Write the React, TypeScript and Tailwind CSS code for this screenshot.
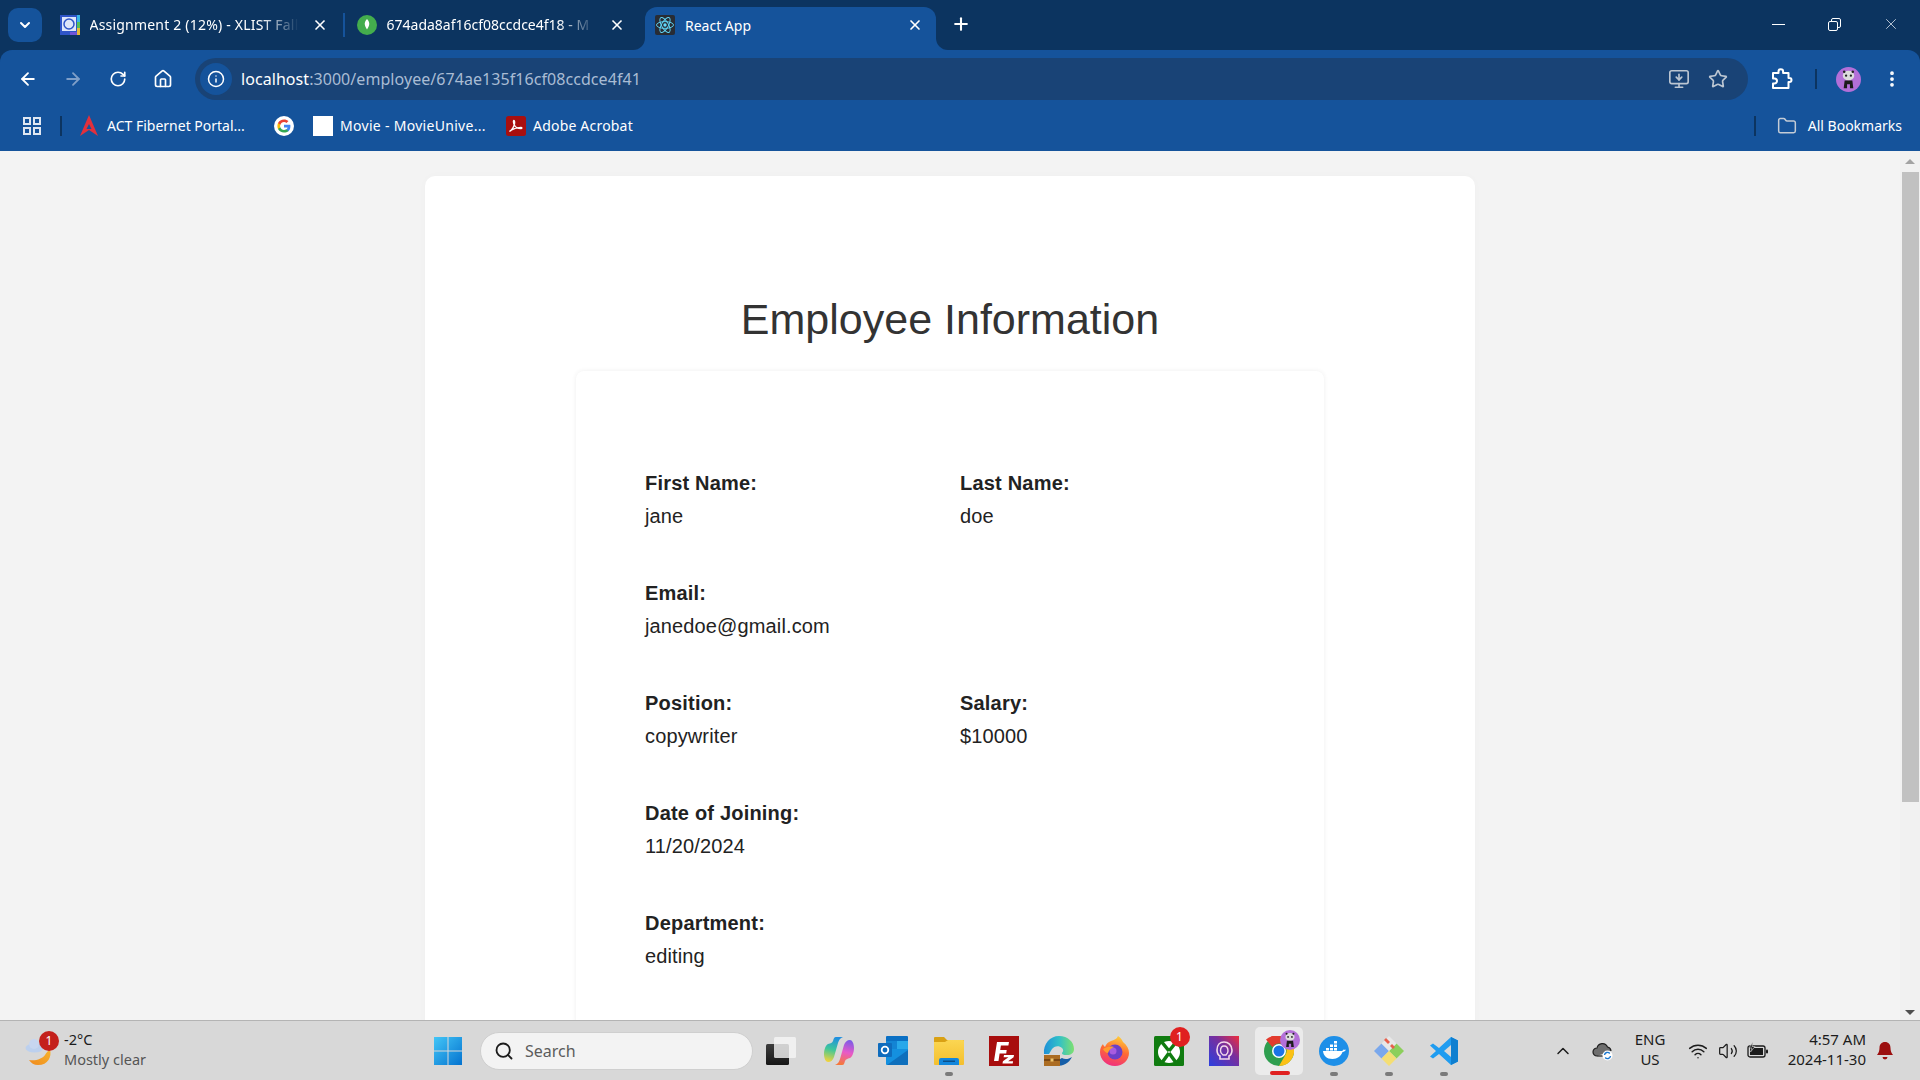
import React from 'react';
import {
  ArrowLeft,
  ArrowRight,
  ChevronDown,
  ChevronUp,
  EllipsisVertical,
  Folder,
  House,
  Info,
  MonitorDown,
  Plus,
  RotateCw,
  Search,
  Star,
  Volume2,
  Wifi,
  X,
} from 'lucide-react';

type FieldProps = {
  label: string;
  value: string;
  wide?: boolean;
};

const fields: FieldProps[] = [
  { label: 'First Name:', value: 'jane' },
  { label: 'Last Name:', value: 'doe' },
  { label: 'Email:', value: 'janedoe@gmail.com', wide: true },
  { label: 'Position:', value: 'copywriter' },
  { label: 'Salary:', value: '$10000' },
  { label: 'Date of Joining:', value: '11/20/2024', wide: true },
  { label: 'Department:', value: 'editing', wide: true },
];

function Field({ label, value, wide }: FieldProps) {
  return (
    <div className={wide ? 'col-span-2' : ''}>
      <div className="text-[20px] leading-[24px] font-bold tracking-[0.2px] text-[#222222]">{label}</div>
      <div className="mb-[1px] mt-[9px] text-[20px] leading-[24px] tracking-[0.13px] text-[#222222]">{value}</div>
    </div>
  );
}

function SchoolIcon() {
  return (
    <svg width="20" height="20" viewBox="0 0 20 20">
      <rect width="20" height="20" fill="#2f55c8" />
      <rect x="2" y="2" width="14" height="14" fill="#dfe6fa" />
      <circle cx="9" cy="9" r="5" fill="none" stroke="#2f55c8" strokeWidth="1.5" />
      <rect x="17" y="0" width="3" height="7" fill="#38b6e8" />
      <rect x="17" y="7" width="3" height="6" fill="#55c05a" />
      <rect x="17" y="13" width="3" height="7" fill="#e7b93a" />
      <rect x="10" y="17" width="7" height="3" fill="#6f55d8" />
    </svg>
  );
}

function MongoIcon() {
  return (
    <svg width="20" height="20" viewBox="0 0 20 20">
      <circle cx="10" cy="10" r="10" fill="#44ad4d" />
      <path d="M10 4c2 2 2.500 4 2.200 5.600C12 11.500 11 13 10 14.500 9 13 8 11.500 7.800 9.600 7.500 8 8 6 10 4z" fill="#ffffff" />
    </svg>
  );
}

function ReactIcon() {
  return (
    <svg width="20" height="20" viewBox="0 0 20 20">
      <rect width="20" height="20" rx="2" fill="#282c34" />
      <g fill="none" stroke="#61dafb" strokeWidth="0.9">
        <ellipse cx="10" cy="10" rx="8.500" ry="3.400" />
        <ellipse cx="10" cy="10" rx="8.500" ry="3.400" transform="rotate(60 10 10)" />
        <ellipse cx="10" cy="10" rx="8.500" ry="3.400" transform="rotate(120 10 10)" />
      </g>
      <circle cx="10" cy="10" r="1.700" fill="#61dafb" />
    </svg>
  );
}

function GoogleIcon() {
  return (
    <svg width="20" height="20" viewBox="0 0 20 20">
      <circle cx="10" cy="10" r="10" fill="#ffffff" />
      <path d="M16.400 10.200c0-.5 0-1-.1-1.400H10v2.700h3.600c-.2.900-.7 1.600-1.400 2.100v1.700h2.300c1.200-1.200 1.900-2.900 1.900-5.100z" fill="#4285f4" />
      <path d="M10 16.600c1.800 0 3.300-.6 4.500-1.600l-2.300-1.800c-.6.400-1.300.7-2.200.7-1.700 0-3.200-1.200-3.700-2.700H4v1.800c1.100 2.200 3.400 3.600 6 3.600z" fill="#34a853" />
      <path d="M6.300 11.200c-.3-.8-.3-1.600 0-2.400V7H4c-.8 1.600-.8 4.400 0 6l2.300-1.800z" fill="#fbbc05" />
      <path d="M10 6.100c1 0 1.800.3 2.500 1l2-2C13.300 4 11.800 3.400 10 3.400 7.400 3.400 5.100 4.800 4 7l2.300 1.800c.5-1.500 2-2.700 3.700-2.700z" fill="#ea4335" />
    </svg>
  );
}

function ActIcon() {
  return (
    <svg width="20" height="22" viewBox="0 0 20 22">
      <path d="M10 0l9 21-9-6-9 6z" fill="#e2303c" />
      <path d="M10 9l2.500 5h-5z" fill="#15539b" />
    </svg>
  );
}

function AcrobatIcon() {
  return (
    <svg width="20" height="20" viewBox="0 0 20 20">
      <rect width="20" height="20" rx="2.500" fill="#a80f0f" />
      <path d="M3.500 15.500c2-1 4-4 5-7.500.3-1.500.2-3.500-.6-3.500s-.6 2.500.4 4.500c1.300 2.500 3.500 3.700 6.500 3.700 1.500 0 1.500-1.300 0-1.300-3 0-7 1.200-10.300 3.100z" fill="none" stroke="#ffffff" strokeWidth="1.300" />
    </svg>
  );
}

function PuzzleIcon() {
  return (
    <svg width="22" height="22" viewBox="0 0 22 22" fill="none" stroke="#ffffff" strokeWidth="2" strokeLinejoin="round">
      <path d="M2 5h5.500V3.500a2.300 2.300 0 0 1 4.600 0V5H17.500v5h1a2 2 0 0 1 0 4h-1v6H2v-4.500h1.500a2.500 2.500 0 0 0 0-5H2z" />
    </svg>
  );
}

function PandaAvatar({ size }: { size: number }) {
  return (
    <svg width={size} height={size} viewBox="0 0 26 26">
      <circle cx="13" cy="13" r="13" fill="#b36fd8" />
      <ellipse cx="13" cy="9" rx="6" ry="5" fill="#dcdcdc" />
      <circle cx="8.500" cy="5" r="1.300" fill="#222222" />
      <circle cx="17.500" cy="5" r="1.300" fill="#222222" />
      <circle cx="10.500" cy="9" r="1.200" fill="#222222" />
      <circle cx="15.500" cy="9" r="1.200" fill="#222222" />
      <path d="M9 14h8l1 8h-3.500v-4h-3v4H8z" fill="#1c1c1c" />
    </svg>
  );
}

function WeatherIcon() {
  return (
    <svg width="30" height="34" viewBox="0 0 30 34">
      <defs>
        <linearGradient id="moon" x1="0" y1="1" x2="1" y2="0">
          <stop offset="0" stopColor="#f08a1e" />
          <stop offset="1" stopColor="#f6b52c" />
        </linearGradient>
      </defs>
      <path d="M26 15c2 8-2 16-12 16-4 0-7-2-9-5 7 1 13-1 16-5 1-2 3-4 5-6z" fill="url(#moon)" />
      <ellipse cx="10.500" cy="14" rx="9" ry="4.500" fill="#bcd0ee" />
      <circle cx="10" cy="10" r="5" fill="#c7d6f0" />
    </svg>
  );
}

function WindowsIcon() {
  return (
    <svg width="30" height="30" viewBox="0 0 30 30">
      <defs>
        <linearGradient id="win" x1="0" y1="0" x2="1" y2="1">
          <stop offset="0" stopColor="#43c6f7" />
          <stop offset="1" stopColor="#0472cf" />
        </linearGradient>
      </defs>
      <path d="M1 1h13.500v13.500H1zM15.500 1H29v13.500H15.500zM1 15.500h13.500V29H1zM15.500 15.500H29V29H15.500z" fill="url(#win)" />
    </svg>
  );
}

function TaskViewIcon() {
  return (
    <svg width="30" height="30" viewBox="0 0 30 30">
      <defs>
        <linearGradient id="taskDark" x1="0" y1="0" x2="0" y2="1">
          <stop offset="0" stopColor="#3c3c3c" />
          <stop offset="1" stopColor="#161616" />
        </linearGradient>
      </defs>
      <rect x="0" y="8" width="23" height="21" rx="1.500" fill="url(#taskDark)" />
      <rect x="8" y="1" width="22" height="21" rx="1.500" fill="#f6f6f6" fillOpacity="0.8" />
    </svg>
  );
}

function CopilotIcon() {
  return (
    <svg width="32" height="30" viewBox="0 0 32 30">
      <defs>
        <linearGradient id="copL" x1="0.500" y1="0" x2="0.300" y2="1">
          <stop offset="0" stopColor="#1f8fe0" />
          <stop offset="0.500" stopColor="#3fc79a" />
          <stop offset="1" stopColor="#f2d33c" />
        </linearGradient>
        <linearGradient id="copR" x1="0.700" y1="0" x2="0.500" y2="1">
          <stop offset="0" stopColor="#7a5ce8" />
          <stop offset="0.500" stopColor="#e85ac8" />
          <stop offset="1" stopColor="#f5783c" />
        </linearGradient>
      </defs>
      <path d="M13 1h7c-3 1-4 3-5 6l-4 14c-1 3-3 5-6 5-2 0-4-3-4-8 0-5 2-9 4-10 3-1 4-1 5-3 1-3 1-4 3-4z" fill="url(#copL)" />
      <path d="M19 29h-7c3-1 4-3 5-6l4-14c1-3 3-5 6-5 2 0 4 3 4 8 0 5-2 9-4 10-3 1-4 1-5 3-1 3-1 4-3 4z" fill="url(#copR)" />
    </svg>
  );
}

function OutlookIcon() {
  return (
    <svg width="32" height="30" viewBox="0 0 32 30">
      <rect x="8" y="0" width="22" height="14" rx="1" fill="#0a70c4" />
      <rect x="19" y="5" width="11" height="9" fill="#28a8ea" />
      <rect x="8" y="5" width="11" height="9" fill="#1384d4" />
      <path d="M8 13h22v15a1 1 0 0 1-1 1H9a1 1 0 0 1-1-1z" fill="#1490df" />
      <path d="M9 29l21-15v14a1 1 0 0 1-1 1z" fill="#0e6fbc" />
      <rect x="0" y="7" width="14" height="14" rx="1" fill="#0f6cbd" />
      <circle cx="7" cy="14" r="3.300" fill="none" stroke="#ffffff" strokeWidth="1.800" />
    </svg>
  );
}

function ExplorerIcon() {
  return (
    <svg width="32" height="28" viewBox="0 0 32 28">
      <path d="M1 1a1 1 0 0 1 1-1h9l3 3h17v6H1z" fill="#d9a114" />
      <defs>
        <linearGradient id="folder" x1="0" y1="0" x2="0" y2="1">
          <stop offset="0" stopColor="#fbd652" />
          <stop offset="1" stopColor="#f4bf2e" />
        </linearGradient>
      </defs>
      <path d="M1 5h11l3-2h15a1 1 0 0 1 1 1v23a1 1 0 0 1-1 1H2a1 1 0 0 1-1-1z" fill="url(#folder)" />
      <path d="M6 28v-5a2 2 0 0 1 2-2h16a2 2 0 0 1 2 2v5z" fill="#1286dc" />
      <rect x="10" y="23.500" width="12" height="1.500" fill="#0a4f8a" />
    </svg>
  );
}

function FileZillaIcon() {
  return (
    <svg width="30" height="30" viewBox="0 0 30 30">
      <rect width="30" height="30" fill="#a80d0d" />
      <path d="M5 25l3-19h12l-.6 3.500h-7.500l-.7 4.500h6.500l-.5 3.500h-6.600L9.500 25z" fill="#ffffff" />
      <path d="M15 19h10l-.4 2.200-5.500 4h5l-.4 2.300H13.500l.4-2.200 5.500-4h-4.800z" fill="#ffffff" />
    </svg>
  );
}

function EdgeIcon() {
  return (
    <svg width="32" height="32" viewBox="0 0 32 32">
      <defs>
        <linearGradient id="edge" x1="0" y1="0.500" x2="1" y2="0.500">
          <stop offset="0" stopColor="#1e90d8" />
          <stop offset="0.500" stopColor="#30c0c8" />
          <stop offset="1" stopColor="#7ee070" />
        </linearGradient>
      </defs>
      <path d="M1 19C0 9 7 1 16 1c9 0 15 6 15 13 0 4-3 6-7 6-2 0-5 0-5-2 1-1 2-3 0-5-3-3-8-2-10 1-1 2-2 3-3 5z" fill="url(#edge)" />
      <path d="M13 31c8 0 13-3 16-9-3 2-7 3-10 1-3 1-5 5-6 8z" fill="#155ea8" />
      <rect x="1" y="20" width="16" height="11" fill="#ab6c22" />
      <rect x="1" y="24" width="16" height="2" fill="#7b4813" />
      <rect x="7.500" y="23.500" width="3" height="3" fill="#eec46a" />
    </svg>
  );
}

function FirefoxIcon() {
  return (
    <svg width="32" height="32" viewBox="0 0 32 32">
      <defs>
        <linearGradient id="fox" x1="0.700" y1="0" x2="0.400" y2="1">
          <stop offset="0" stopColor="#ffd23a" />
          <stop offset="0.500" stopColor="#ff6a33" />
          <stop offset="1" stopColor="#f0307e" />
        </linearGradient>
      </defs>
      <path d="M20 1c3 2 4 4 5 6 4 3 6 7 6 11 0 7-6 13-14 13S2 25 2 17c0-3 1-6 3-8 0 1 1 2 2 3 1-3 3-5 6-6 3-1 6-2 7-5z" fill="url(#fox)" />
      <circle cx="17" cy="17" r="7.500" fill="#6b3fc8" />
      <circle cx="15" cy="16" r="3.500" fill="#a85ce0" />
      <path d="M5 14c3-2 7-3 11-2-3 1-5 3-6 6-2 0-4-2-5-4z" fill="#ff9a2e" />
    </svg>
  );
}

function XboxIcon() {
  return (
    <svg width="30" height="30" viewBox="0 0 30 30">
      <rect width="30" height="30" rx="1.500" fill="#107c10" />
      <circle cx="15" cy="16" r="11" fill="#ffffff" />
      <path d="M15 15L7 5M15 15L23 5M15 17L7 28M15 17L23 28" stroke="#107c10" strokeWidth="3.500" />
    </svg>
  );
}

function ProtonIcon() {
  return (
    <svg width="30" height="30" viewBox="0 0 30 30">
      <defs>
        <linearGradient id="proton" x1="0" y1="1" x2="1" y2="0">
          <stop offset="0" stopColor="#2a3fe0" />
          <stop offset="0.600" stopColor="#7a2f9c" />
          <stop offset="1" stopColor="#ef2d3c" />
        </linearGradient>
      </defs>
      <rect width="30" height="30" fill="url(#proton)" />
      <path d="M8 14c0-5 3-8 7-8s8 3 8 8c0 3-1 5-3 6v3h-9v-3c-2-1-3-3-3-6z" fill="none" stroke="#f4d8ea" strokeWidth="1.600" />
      <path d="M11.500 15c0-3 1-5 3.500-5s4 2 4 5c0 2-1 3-2 4h-3c-1.500-1-2.500-2-2.500-4z" fill="none" stroke="#f4d8ea" strokeWidth="1.400" />
    </svg>
  );
}

function ChromeIcon() {
  return (
    <svg width="30" height="30" viewBox="0 0 30 30">
      <circle cx="15" cy="15" r="15" fill="#2e9e4f" />
      <path d="M15 0a15 15 0 0 1 13 7.500H15a7.500 7.500 0 0 0-6.500 3.800L2 3.500A15 15 0 0 1 15 0z" fill="#e33b2e" />
      <path d="M28 7.500A15 15 0 0 1 15 30l6.500-11.300A7.500 7.500 0 0 0 21.500 11z" fill="#fbc116" />
      <circle cx="15" cy="15" r="7" fill="#ffffff" />
      <circle cx="15" cy="15" r="5.500" fill="#1a73e8" />
    </svg>
  );
}

function DockerIcon() {
  return (
    <svg width="30" height="30" viewBox="0 0 30 30">
      <circle cx="15" cy="15" r="15" fill="#1d8fe8" />
      <path d="M4 15h18c1 0 2-.5 2.500-1.500.8.300 1.700.3 2.500 0-.5 1.500-2 2.500-3.500 2.500-1.500 4-5 7-10 7-6 0-9-3.500-9.500-8z" fill="#ffffff" />
      <path d="M7 12h3v2.500H7zM11 12h3v2.500h-3zM15 12h3v2.500h-3zM11 8.500h3V11h-3zM15 8.500h3V11h-3zM15 5h3v2.500h-3z" fill="#ffffff" />
    </svg>
  );
}

function GitKrakenIcon() {
  return (
    <svg width="32" height="32" viewBox="0 0 32 32">
      <path d="M1 16l7.500-7.500L16 16l-7.500 7.500z" fill="#7aa8ec" />
      <path d="M16 16l7.500-7.500L31 16l-7.500 7.500z" fill="#8ccf5c" />
      <path d="M8.500 23.500L16 16l7.500 7.500L16 31z" fill="#f4de74" />
      <path d="M8.500 8.500L16 1l7.500 7.500L16 16z" fill="#e8e8e8" />
      <path d="M13 3l4 4-2 2-4-4zM19 9l3 3-2 2-3-3z" fill="#e8604c" />
    </svg>
  );
}

function VsCodeIcon() {
  return (
    <svg width="30" height="30" viewBox="0 0 30 30">
      <path d="M22 1l7 3.500v21L22 29 10 18l-6 4.500L1 20.500 7 15 1 9.500 4 7.500 10 12z" fill="#1f9cf0" />
      <path d="M22 1l7 3.500v21L22 29z" fill="#0f7fd0" />
      <path d="M22 9l-7 6 7 6z" fill="#d8d8d8" />
    </svg>
  );
}

function TrayCloudIcon() {
  return (
    <svg width="22" height="20" viewBox="0 0 22 20">
      <path d="M5 15a4 4 0 0 1 0-8 5.500 5.500 0 0 1 10.500-1A4.500 4.500 0 0 1 19 10" fill="#6e6e6e" stroke="#1f1f1f" strokeWidth="1.200" />
      <path d="M5 15h6" stroke="#1f1f1f" strokeWidth="1.200" />
      <circle cx="15.500" cy="14.500" r="5" fill="#ffffff" />
      <path d="M12.500 14a3 3 0 0 1 5.300-1.500M18.500 15a3 3 0 0 1-5.300 1.500" fill="none" stroke="#1a78d0" strokeWidth="1.400" />
    </svg>
  );
}

function BatteryIcon() {
  return (
    <svg width="22" height="18" viewBox="0 0 22 18">
      <rect x="1" y="4" width="17" height="11" rx="2" fill="none" stroke="#1a1a1a" strokeWidth="1.300" />
      <rect x="3" y="6" width="13" height="7" fill="#1a1a1a" />
      <rect x="19" y="7.500" width="2" height="4" rx="1" fill="#1a1a1a" />
      <path d="M6 0L2 6h3L3.500 10 8 4.500H5z" fill="#1a1a1a" stroke="#d8d8d8" strokeWidth="0.600" />
    </svg>
  );
}

function BellIcon() {
  return (
    <svg width="18" height="20" viewBox="0 0 18 20">
      <path d="M9 1c3.500 0 5.500 2.500 5.500 6 0 3 1 5 2.500 7H1c1.500-2 2.500-4 2.500-7C3.500 3.500 5.500 1 9 1z" fill="#9c0f0f" />
      <path d="M6.500 16h5a2.500 2.500 0 0 1-5 0z" fill="#9c0f0f" />
    </svg>
  );
}

function Tab({
  icon,
  title,
  divider,
}: {
  icon: React.ReactNode;
  title: string;
  divider?: boolean;
}) {
  return (
    <div className="flex h-[43px] w-[297px] shrink-0 items-center pl-[12px]">
      <div className="flex w-[29.500px] shrink-0 items-center">{icon}</div>
      <div
        className={`w-[209px] shrink-0 overflow-hidden whitespace-nowrap text-[14px] text-white [mask-image:linear-gradient(to_right,black_82%,transparent_100%)] ${
          divider ? 'tracking-[0.2px]' : ''
        }`}
      >
        {title}
      </div>
      <X className="ml-[13px] h-[16px] w-[16px] shrink-0 text-white" strokeWidth={2.500} />
      {divider && <div className="ml-[15px] h-[24px] w-[2px] shrink-0 bg-[#15539b]" />}
    </div>
  );
}

function TabStrip() {
  return (
    <div className="flex h-[50px] shrink-0 bg-[#0c3460] pl-[8px]">
      <div className="mt-[8px] flex h-[34px] w-[34px] shrink-0 items-center justify-center rounded-[10px] bg-[#15539b]">
        <ChevronDown className="h-[16px] w-[16px] text-white" strokeWidth={3} />
      </div>
      <div className="ml-[6px] flex pt-[3px]">
        <Tab icon={<SchoolIcon />} title="Assignment 2 (12%) - XLIST Fall" divider />
        <Tab icon={<MongoIcon />} title="674ada8af16cf08ccdce4f18 - M" />
      </div>
      <div className="relative ml-[3px] mt-[7px] flex h-[43px] w-[291px] shrink-0 items-center rounded-t-[12px] bg-[#15539b] pb-[7px] pl-[10px] pr-[13px]">
        <span className="absolute bottom-0 -left-[12px] h-[12px] w-[12px] bg-[#15539b]">
          <span className="block h-full w-full rounded-br-[12px] bg-[#0c3460]" />
        </span>
        <span className="absolute bottom-0 -right-[12px] h-[12px] w-[12px] bg-[#15539b]">
          <span className="block h-full w-full rounded-bl-[12px] bg-[#0c3460]" />
        </span>
        <div className="flex w-[30px] shrink-0 items-center">
          <ReactIcon />
        </div>
        <div className="flex-1 whitespace-nowrap text-[14px] text-white">React App</div>
        <X className="h-[16px] w-[16px] shrink-0 text-white" strokeWidth={2.500} />
      </div>
      <div className="ml-[15px] flex h-[43px] items-center pt-[5px]">
        <Plus className="h-[20px] w-[20px] text-white" strokeWidth={2.500} />
      </div>
      <div className="ml-auto flex h-[48px] items-center text-[#e8eef6]">
        <div className="flex w-[56px] justify-center">
          <div className="h-[1px] w-[13px] bg-white" />
        </div>
        <div className="flex w-[56px] justify-center">
          <div className="relative h-[13px] w-[13px]">
            <div className="absolute right-0 top-0 h-[10px] w-[10px] rounded-[2px] border border-white" />
            <div className="absolute bottom-0 left-0 h-[10px] w-[10px] rounded-[2px] border border-white bg-[#0c3460]" />
          </div>
        </div>
        <div className="flex w-[58px] justify-center">
          <X className="h-[18px] w-[18px]" strokeWidth={1} />
        </div>
      </div>
    </div>
  );
}

function Toolbar() {
  return (
    <div className="flex h-[58px] shrink-0 items-center py-[8px] pl-[5px] pr-[18px]">
      <div className="flex w-[45px] justify-center">
        <ArrowLeft className="h-[20px] w-[20px] text-white" strokeWidth={2.200} />
      </div>
      <div className="flex w-[45px] justify-center">
        <ArrowRight className="h-[20px] w-[20px] text-[#7f9fc8]" strokeWidth={2.200} />
      </div>
      <div className="flex w-[45px] justify-center">
        <RotateCw className="h-[18px] w-[18px] text-white" strokeWidth={2.200} />
      </div>
      <div className="flex w-[45px] justify-center">
        <House className="h-[20px] w-[20px] text-white" strokeWidth={2} />
      </div>
      <div className="ml-[10px] flex h-[42px] flex-1 items-center rounded-full bg-[#194376] pl-[5px] pr-[20px]">
        <div className="flex h-[32px] w-[32px] items-center justify-center rounded-full bg-[#15539b]">
          <Info className="h-[18px] w-[18px] text-white" strokeWidth={2} />
        </div>
        <div className="ml-[9px] flex-1 whitespace-nowrap text-[16px] tracking-[0.06px] text-[#a9bcd4]">
          <span className="text-white">localhost</span>:3000/employee/674ae135f16cf08ccdce4f41
        </div>
        <MonitorDown className="h-[22px] w-[22px] text-[#bcc6d2]" strokeWidth={1.800} />
        <Star className="ml-[18px] h-[20px] w-[20px] text-[#bcc6d2]" strokeWidth={2} />
      </div>
      <div className="ml-[23px] flex w-[22px] justify-center">
        <PuzzleIcon />
      </div>
      <div className="ml-[22px] h-[20px] w-[2px] bg-[#0c3460]" />
      <div className="ml-[19px]">
        <PandaAvatar size={25} />
      </div>
      <div className="ml-[21px] flex w-[20px] justify-center">
        <EllipsisVertical className="h-[22px] w-[22px] text-white" strokeWidth={2.500} />
      </div>
    </div>
  );
}

function BookmarksBar() {
  return (
    <div className="flex h-[43px] shrink-0 items-center pb-[8px] pl-[23px] pr-[18px] text-[14px] text-white">
      <div className="grid h-[18px] w-[18px] grid-cols-2 gap-[2px]">
        <div className="border-2 border-[#dfe7f2]" />
        <div className="border-2 border-[#dfe7f2]" />
        <div className="border-2 border-[#dfe7f2]" />
        <div className="border-2 border-[#dfe7f2]" />
      </div>
      <div className="ml-[19px] h-[20px] w-[2px] bg-[#0c3460]" />
      <div className="ml-[17px] flex w-[20px] justify-center">
        <ActIcon />
      </div>
      <div className="ml-[8px] w-[140px] whitespace-nowrap">ACT Fibernet Portal...</div>
      <div className="ml-[27px]">
        <GoogleIcon />
      </div>
      <div className="ml-[19px] h-[20px] w-[20px] bg-white" />
      <div className="ml-[7px] w-[146px] whitespace-nowrap tracking-[0.3px]">Movie - MovieUnive...</div>
      <div className="ml-[20px]">
        <AcrobatIcon />
      </div>
      <div className="ml-[7px] whitespace-nowrap tracking-[0.2px]">Adobe Acrobat</div>
      <div className="ml-auto h-[20px] w-[2px] bg-[#0c3460]" />
      <Folder className="ml-[21px] h-[20px] w-[20px] text-[#c4ccd6]" strokeWidth={1.800} />
      <div className="ml-[11px] whitespace-nowrap">All Bookmarks</div>
    </div>
  );
}

function Scrollbar() {
  return (
    <div className="flex w-[20px] shrink-0 flex-col items-center bg-[#f1f1f1]">
      <div className="mt-[8px] h-0 w-0 border-x-[5px] border-b-[5px] border-x-transparent border-b-[#a3a3a3]" />
      <div className="mt-[8px] h-[630px] w-[17px] bg-[#c1c1c1]" />
      <div className="mt-auto mb-[5px] h-0 w-0 border-x-[5px] border-t-[5px] border-x-transparent border-t-[#505050]" />
    </div>
  );
}

function EmployeePage() {
  return (
    <div className="flex min-h-0 flex-1 bg-[#f3f3f3] font-['Liberation_Sans',Arial,sans-serif]">
      <div className="min-h-0 flex-1 overflow-hidden">
        <div className="mx-auto mt-[25px] w-[1050px] rounded-[10px] bg-white px-[151px] pb-[60px] pt-[118px] shadow-[0_0_10px_rgba(0,0,0,0.02)]">
          <h1 className="text-center text-[43px] leading-[50px] text-[#333333]">Employee Information</h1>
          <div className="mt-[27px] rounded-[8px] bg-white pb-[60px] pl-[69px] pr-[69px] pt-[100px] shadow-[0_0_5px_rgba(0,0,0,0.07)]">
            <div className="grid grid-cols-2 gap-x-[20px] gap-y-[52px]">
              {fields.map((field) => (
                <Field key={field.label} {...field} />
              ))}
            </div>
          </div>
        </div>
      </div>
      <Scrollbar />
    </div>
  );
}

const taskbarIcons: { key: string; icon: React.ReactNode; running?: boolean; badge?: boolean; active?: boolean }[] = [
  { key: 'copilot', icon: <CopilotIcon /> },
  { key: 'outlook', icon: <OutlookIcon /> },
  { key: 'explorer', icon: <ExplorerIcon />, running: true },
  { key: 'filezilla', icon: <FileZillaIcon /> },
  { key: 'edge', icon: <EdgeIcon /> },
  { key: 'firefox', icon: <FirefoxIcon /> },
  { key: 'xbox', icon: <XboxIcon />, badge: true },
  { key: 'proton', icon: <ProtonIcon /> },
  { key: 'chrome', icon: <ChromeIcon />, active: true },
  { key: 'docker', icon: <DockerIcon />, running: true },
  { key: 'gitkraken', icon: <GitKrakenIcon />, running: true },
  { key: 'vscode', icon: <VsCodeIcon />, running: true },
];

function TaskbarIcon({
  icon,
  running,
  badge,
  active,
}: {
  icon: React.ReactNode;
  running?: boolean;
  badge?: boolean;
  active?: boolean;
}) {
  return (
    <div className="relative flex h-[48px] w-[55px] items-center justify-center">
      {active && <div className="absolute left-[3.500px] top-0 h-[48px] w-[48px] rounded-[5px] bg-[#ebebeb]" />}
      <div className="relative flex items-center justify-center">{icon}</div>
      {badge && (
        <div className="absolute left-[28px] top-[0px] flex h-[20px] w-[20px] items-center justify-center rounded-full bg-[#e02020] text-[12px] text-white">
          1
        </div>
      )}
      {active && (
        <>
          <div className="absolute left-[28px] top-[3px]">
            <PandaAvatar size={20} />
          </div>
          <div className="absolute bottom-0 left-[18px] h-[4px] w-[20px] rounded-full bg-[#e02020]" />
        </>
      )}
      {running && <div className="absolute -bottom-[1px] left-[23px] h-[4px] w-[8px] rounded-full bg-[#7a7a7a]" />}
    </div>
  );
}

function Taskbar() {
  return (
    <div className="flex h-[60px] shrink-0 items-center border-t border-[#b4b4b4] bg-[#d8d8d8] text-[14px]">
      <div className="flex w-[420px] shrink-0 items-center pl-[24px]">
        <div className="relative h-[34px] w-[30px]">
          <WeatherIcon />
          <div className="absolute -top-[3px] left-[15px] flex h-[20px] w-[20px] items-center justify-center rounded-full bg-[#c4201c] text-[12px] text-white">
            1
          </div>
        </div>
        <div className="mb-[4px] ml-[10px] text-[14.500px] leading-[20px]">
          <div className="text-[#1c1c1c]">-2°C</div>
          <div className="text-[#555555]">Mostly clear</div>
        </div>
      </div>
      <div className="flex w-[55px] shrink-0 justify-center">
        <WindowsIcon />
      </div>
      <div className="ml-[5px] flex h-[38px] w-[273px] shrink-0 items-center rounded-full border border-[#cfcfcf] bg-[#f3f3f3] pl-[13px] text-[16px] text-[#5c5c5c]">
        <Search className="h-[20px] w-[20px] text-[#1c1c1c]" strokeWidth={2.200} />
        <span className="ml-[11px]">Search</span>
      </div>
      <div className="flex w-[55px] shrink-0 justify-center">
        <TaskViewIcon />
      </div>
      <div className="ml-[3.500px] flex shrink-0">
        {taskbarIcons.map((item) => (
          <TaskbarIcon key={item.key} icon={item.icon} running={item.running} badge={item.badge} active={item.active} />
        ))}
      </div>
      <div className="ml-auto flex items-center pr-[16px] text-[#1c1c1c]">
        <div className="flex w-[56px] justify-center">
          <ChevronUp className="h-[20px] w-[20px]" strokeWidth={1.800} />
        </div>
        <div className="flex w-[24px] justify-center">
          <TrayCloudIcon />
        </div>
        <div className="mb-[3px] w-[70px] text-center text-[15px] leading-[20px]">
          ENG
          <br />
          US
        </div>
        <div className="flex w-[26px] justify-center">
          <Wifi className="h-[20px] w-[20px]" strokeWidth={1.800} />
        </div>
        <div className="flex w-[34px] justify-center">
          <Volume2 className="h-[20px] w-[20px]" strokeWidth={1.500} />
        </div>
        <div className="flex w-[26px] justify-center">
          <BatteryIcon />
        </div>
        <div className="mb-[3px] w-[95px] text-right text-[15px] leading-[20px]">
          4:57 AM
          <br />
          2024-11-30
        </div>
        <div className="flex w-[38px] justify-center">
          <BellIcon />
        </div>
      </div>
    </div>
  );
}

export default function App() {
  return (
    <div className="flex h-[1080px] w-[1920px] flex-col overflow-hidden bg-[#0c3460] font-['Noto_Sans',sans-serif]">
      <TabStrip />
      <div className="flex flex-col rounded-t-[12px] bg-[#15539b]">
        <Toolbar />
        <BookmarksBar />
      </div>
      <EmployeePage />
      <Taskbar />
    </div>
  );
}
